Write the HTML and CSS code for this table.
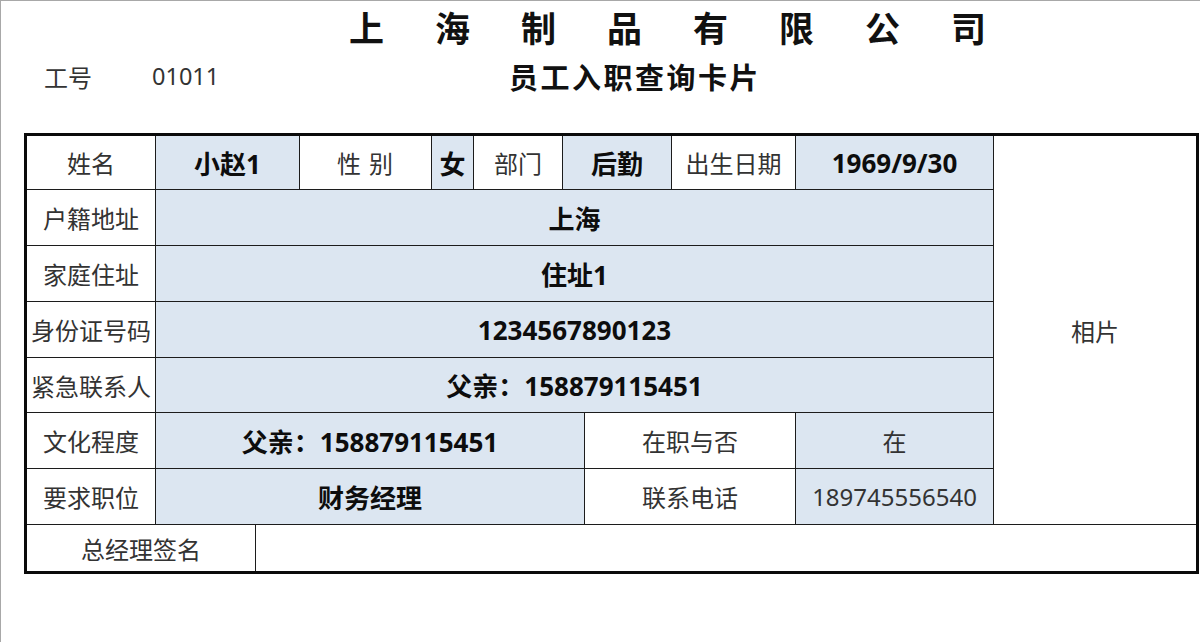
FILE: index.html
```html
<!DOCTYPE html>
<html lang="zh-CN">
<head>
<meta charset="utf-8">
<title>员工入职查询卡片</title>
<link rel="stylesheet" href="styles.css">
</head>
<body>
<div class="sheet">
  <header class="head">
    <div class="title">上海制品有限公司</div>
    <div class="subrow">
      <span class="meta-label">工号</span>
      <span class="meta-value">01011</span>
      <span class="subtitle">员工入职查询卡片</span>
    </div>
  </header>
  <div class="card">
    <div class="c lbl r1 c1">姓名</div>
    <div class="c val fill r1 s2-4">小赵1</div>
    <div class="c lbl r1 c4 spaced">性 别</div>
    <div class="c val fill r1 c5">女</div>
    <div class="c lbl r1 c6">部门</div>
    <div class="c val fill r1 s7-9">后勤</div>
    <div class="c lbl r1 c9">出生日期</div>
    <div class="c val fill r1 c10">1969/9/30</div>
    <div class="c lbl photo">相片</div>

    <div class="c lbl r2 c1">户籍地址</div>
    <div class="c val fill r2 wide">上海</div>
    <div class="c lbl r3 c1">家庭住址</div>
    <div class="c val fill r3 wide">住址1</div>
    <div class="c lbl r4 c1">身份证号码</div>
    <div class="c val fill r4 wide">1234567890123</div>
    <div class="c lbl r5 c1">紧急联系人</div>
    <div class="c val fill r5 wide">父亲：158879115451</div>

    <div class="c lbl r6 c1">文化程度</div>
    <div class="c val fill r6 half">父亲：158879115451</div>
    <div class="c lbl r6 s8-10">在职与否</div>
    <div class="c lbl fill r6 c10">在</div>

    <div class="c lbl r7 c1">要求职位</div>
    <div class="c val fill r7 half">财务经理</div>
    <div class="c lbl r7 s8-10">联系电话</div>
    <div class="c lbl fill r7 c10">189745556540</div>

    <div class="c lbl r8 sign">总经理签名</div>
    <div class="c r8 signbox"></div>
  </div>
</div>
</body>
</html>
```
FILE: styles.css
```css
* { box-sizing: border-box; }
html, body { margin: 0; padding: 0; background: #fff; }
body {
  font-family: "Noto Sans", "Noto Sans CJK SC", sans-serif;
  color: #222;
}
.sheet {
  width: 1200px;
  height: 642px;
  border-top: 1px solid #a8a8a8;
  border-left: 1px solid #a8a8a8;
  overflow: hidden;
}
.head { height: 132px; }
.title {
  font-family: "Noto Sans CJK SC", sans-serif;
  font-weight: 700;
  font-size: 35px;
  line-height: 52px;
  letter-spacing: 51px;
  padding-left: 348px;
  color: #111;
  white-space: nowrap;
}
.subrow {
  display: flex;
  align-items: center;
  height: 46px;
  white-space: nowrap;
}
.meta-label {
  font-family: "Noto Sans CJK SC", sans-serif;
  font-size: 24px;
  margin-left: 43px;
  width: 108px;
  color: #333;
}
.meta-value {
  font-size: 23.5px;
  width: 357px;
  color: #333;
}
.subtitle {
  font-family: "Noto Sans CJK SC", sans-serif;
  font-weight: 700;
  font-size: 29px;
  letter-spacing: 2.5px;
  color: #111;
}
.card {
  margin-left: 23px;
  width: 1175px;
  border: 3px solid #0a0a0a;
  display: grid;
  grid-template-columns: 129px 100px 44px 132px 42px 89px 22px 87px 124px 198px 202px;
  grid-template-rows: 54px 56px 56px 56px 55px 56px 56px 46px;
}
.c {
  display: flex;
  align-items: center;
  justify-content: center;
  border-right: 1px solid #1c1c1c;
  border-bottom: 1px solid #1c1c1c;
  font-size: 24px;
  white-space: nowrap;
}
.lbl { color: #333; font-weight: 400; }
.val { color: #0d0d0d; font-weight: 700; font-size: 26px; }
.fill { background: #dce6f1; }
.spaced { letter-spacing: 1px; }

.r1 { grid-row: 1; }
.r2 { grid-row: 2; }
.r3 { grid-row: 3; }
.r4 { grid-row: 4; }
.r5 { grid-row: 5; }
.r6 { grid-row: 6; }
.r7 { grid-row: 7; }
.r8 { grid-row: 8; border-bottom: none; }

.c1 { grid-column: 1; }
.s2-4 { grid-column: 2 / 4; }
.c4 { grid-column: 4; }
.c5 { grid-column: 5; }
.c6 { grid-column: 6; }
.s7-9 { grid-column: 7 / 9; }
.c9 { grid-column: 9; }
.c10 { grid-column: 10; }
.wide { grid-column: 2 / 11; }
.half { grid-column: 2 / 8; }
.s8-10 { grid-column: 8 / 10; }
.photo { grid-column: 11; grid-row: 1 / 8; border-right: none; }
.sign { grid-column: 1 / 3; }
.signbox { grid-column: 3 / 12; border-right: none; }
```
